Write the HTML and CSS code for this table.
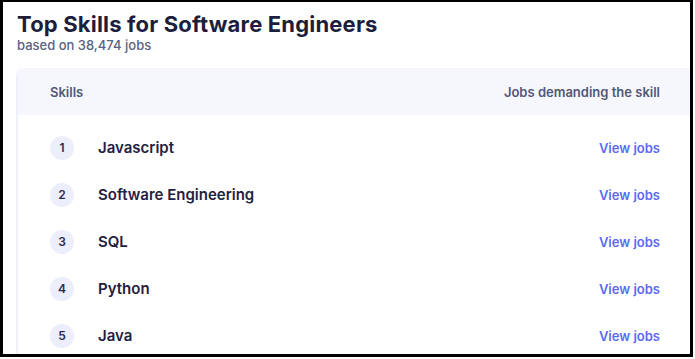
FILE: index.html
```html
<!DOCTYPE html>
<html>
<head>
<meta charset="utf-8">
<link rel="stylesheet" href="styles.css">
</head>
<body>
<div class="frame">
  <h1 class="title">Top Skills for Software Engineers</h1>
  <div class="subtitle">based on 38,474 jobs</div>
  <div class="card">
    <div class="card-head">
      <span>Skills</span>
      <span>Jobs demanding the skill</span>
    </div>
    <div class="rows">
      <div class="row"><span class="rank">1</span><span class="skill">Javascript</span><a class="view">View jobs</a></div>
      <div class="row"><span class="rank">2</span><span class="skill">Software Engineering</span><a class="view">View jobs</a></div>
      <div class="row"><span class="rank">3</span><span class="skill">SQL</span><a class="view">View jobs</a></div>
      <div class="row"><span class="rank">4</span><span class="skill">Python</span><a class="view">View jobs</a></div>
      <div class="row"><span class="rank">5</span><span class="skill">Java</span><a class="view">View jobs</a></div>
    </div>
  </div>
</div>
</body>
</html>
```
FILE: styles.css
```css
html, body {
  margin: 0;
  padding: 0;
  background: #ffffff;
}
body {
  width: 695px;
  height: 359px;
  overflow: hidden;
  font-family: Inter, "Noto Sans", sans-serif;
}
.frame {
  box-sizing: border-box;
  width: 693px;
  height: 357px;
  border: 3px solid #000;
  border-top-width: 2px;
  overflow: hidden;
  padding: 9px 0 0 14px;
}
.title {
  margin: 0;
  font-size: 22px;
  line-height: 26px;
  font-weight: 700;
  color: #1c1e3b;
  letter-spacing: 0.18px;
}
.subtitle {
  margin-top: 0;
  font-size: 13px;
  line-height: 16px;
  font-weight: 500;
  color: #5b6283;
}
.card {
  margin-top: 15px;
  margin-left: -1px;
  margin-right: -20px;
  border-left: 2px solid #eef1fa;
  border-top-left-radius: 8px;
}
.card-head {
  display: flex;
  justify-content: space-between;
  align-items: center;
  height: 47px;
  background: #f6f7fc;
  padding: 0 50px 0 32px;
  font-size: 13px;
  font-weight: 600;
  color: #50577a;
  border-top-left-radius: 8px;
}
.rows {
  padding: 9px 50px 0 32px;
}
.row {
  display: flex;
  align-items: center;
  height: 47px;
}
.rank {
  width: 24px;
  height: 24px;
  border-radius: 50%;
  background: #eceefb;
  display: flex;
  align-items: center;
  justify-content: center;
  font-size: 12px;
  font-weight: 600;
  color: #2a2d4a;
  flex: none;
}
.skill {
  margin-left: 24px;
  font-size: 15px;
  font-weight: 600;
  color: #1f2140;
  flex: 1;
}
.view {
  font-size: 13px;
  font-weight: 600;
  color: #5a6bf2;
}
```
